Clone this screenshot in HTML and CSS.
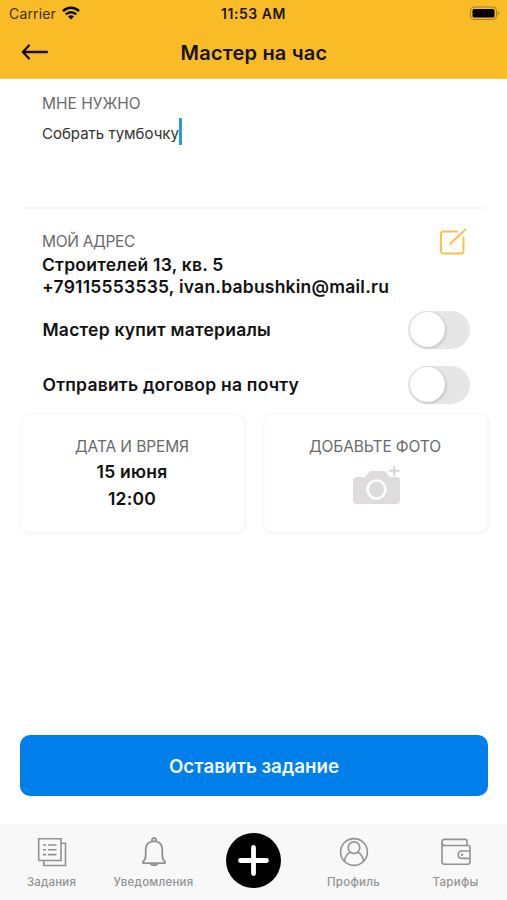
FILE: index.html
```html
<!DOCTYPE html>
<html lang="ru">
<head>
<meta charset="utf-8">
<title>Мастер на час</title>
<link rel="stylesheet" href="styles.css">
</head>
<body>
<div class="app">
  <header class="header">
    <div class="status">
      <div class="status-left"><span class="carrier">Carrier</span>
        <svg class="wifi" width="18" height="14" viewBox="0 0 18 14" fill="none" stroke="#0b0903" stroke-width="2.5"><path d="M1 5.2C5.400.7 12.600.7 17 5.200"/><path d="M3.800 8.300C6.800 5.400 11.200 5.400 14.200 8.300"/><path d="M9 13.500 6 10.400C7.700 8.900 10.300 8.900 12 10.400Z" fill="#0b0903" stroke="none"/></svg>
      </div>
      <span class="time">11:53 AM</span>
      <svg class="battery" width="31" height="15" viewBox="0 0 31 15"><rect x="1.500" y="1" width="26" height="12.500" rx="3.500" fill="none" stroke="#a88024" stroke-width="1"/><rect x="3.500" y="3" width="22" height="8.500" rx="1.500" fill="#000"/><path d="M28.600 5.200v4.200q1.600-.6 1.600-2.100t-1.600-2.100z" fill="#a88024"/></svg>
    </div>
    <div class="titlebar">
      <svg class="back" width="28" height="18" viewBox="0 0 28 18" fill="none" stroke="#161105" stroke-width="2.300" stroke-linecap="round" stroke-linejoin="round"><path d="M26 9H1.800M8 2.500 1.800 9 8 15.500"/></svg>
      <h1 class="title">Мастер на час</h1>
    </div>
  </header>
  <main class="main">
    <section class="need">
      <div class="label label-need">МНЕ НУЖНО</div>
      <div class="input"><span class="input-text">Собрать тумбочку</span><i class="caret"></i></div>
    </section>
    <section class="address">
      <div>
        <div class="label label-address">МОЙ АДРЕС</div>
        <div class="strong street">Строителей 13, кв. 5</div>
        <div class="strong contact">+79115553535, ivan.babushkin@mail.ru</div>
      </div>
      <svg class="edit" width="28" height="28" viewBox="0 0 28 28" fill="none" stroke="#fcc047" stroke-width="1.900" stroke-linecap="round" stroke-linejoin="round"><path d="M18 3.500H4.500Q2 3.500 2 6v17q0 2.500 2.500 2.500h17.500q2.500 0 2.500-2.500V9.500"/><path d="M11 16 24.300 3.400" stroke-width="2.100"/><path d="M26.100 1.700v.1" stroke-width="2.400"/></svg>
    </section>
    <div class="option"><span class="strong buy">Мастер купит материалы</span><span class="toggle"></span></div>
    <div class="option"><span class="strong send">Отправить договор на почту</span><span class="toggle"></span></div>
    <div class="cards">
      <div class="card">
        <div class="label label-date">ДАТА И ВРЕМЯ</div>
        <div class="strong date">15 июня</div>
        <div class="strong hour">12:00</div>
      </div>
      <div class="card">
        <div class="label label-photo">ДОБАВЬТЕ ФОТО</div>
        <svg class="camera" width="48" height="42" viewBox="0 0 48 42"><path d="M4 12h8l4-5q1-1 2.500-1h12q1.500 0 2.500 1l4 5h6q4 0 4 4v19q0 4-4 4H4q-4 0-4-4V16q0-4 4-4z" fill="#dedcdd"/><circle cx="23.500" cy="24.500" r="9" fill="none" stroke="#fff" stroke-width="2.600"/><path d="M41.300 1v10.500M36 6.200h10.600" stroke="#fff" stroke-width="4"/><path d="M41.300.5v10.500M36 5.800h10.600" stroke="#d5d3d4" stroke-width="1.900"/></svg>
      </div>
    </div>
    <button class="submit"><span>Оставить задание</span></button>
  </main>
  <nav class="nav">
    <a class="tab"><svg width="30" height="30" viewBox="0 0 30 30" fill="none" stroke="#929292" stroke-width="1.600"><path d="M1.700 1.700h22.300v21.800H1.700zM24 6.300h4.500v22.200H6.800v-5"/><path d="M6 8h3m2 0h8.500M6 12.800h3m2 0h8.500M6 17.600h3m2 0h8.500"/></svg><span class="tab-tasks">Задания</span></a>
    <a class="tab"><svg width="30" height="30" viewBox="0 0 30 30" fill="none" stroke="#929292" stroke-width="1.800" stroke-linejoin="round"><path d="M13 4.300V3a2 2 0 0 1 4 0v1.300c4.500.9 6.300 4 6.300 8.700v5.500c0 3.500.9 4.800 2.600 6v1.700H4.100v-1.700c1.700-1.200 2.600-2.500 2.600-6V13c0-4.700 1.800-7.800 6.300-8.700z"/><path d="M11.300 26.200a3.800 2.600 0 0 0 7.400 0M13 4.300h4"/></svg><span class="tab-alerts">Уведомления</span></a>
    <a class="add"><svg width="55" height="55" viewBox="0 0 55 55"><circle cx="27.500" cy="27.500" r="27.500" fill="#000"/><path d="M27.500 14.500v26M14.500 27.500h26" stroke="#fff" stroke-width="4.800" stroke-linecap="round"/></svg></a>
    <a class="tab"><svg width="30" height="30" viewBox="0 0 30 30" fill="none" stroke="#929292" stroke-width="1.600"><circle cx="15" cy="15" r="13.400"/><circle cx="15" cy="10.700" r="5.800"/><path d="M5.300 24.500c.8-4.900 2.700-7.700 6-9.300M24.700 24.500c-.8-4.900-2.700-7.700-6-9.300"/></svg><span class="tab-profile">Профиль</span></a>
    <a class="tab"><svg width="30" height="30" viewBox="0 0 30 30" fill="none" stroke="#929292" stroke-width="1.600" stroke-linejoin="round"><path d="M26 8.500V4.200q0-1.800-1.800-1.800H3.200Q1 2.400 1 5.400v19.400q0 2.500 2.500 2.500h23q2.500 0 2.500-2.500V10.500q0-2-2-2H4q-3 0-3-3.100M29 14H20.500q-3.200 0-3.200 3.700t3.200 3.700H29"/><circle cx="21" cy="17.700" r=".5"/></svg><span class="tab-rates">Тарифы</span></a>
  </nav>
</div>
</body>
</html>
```
FILE: styles.css
```css
* { box-sizing: border-box; }
body { margin: 0; font-family: Inter, "Liberation Sans", sans-serif; color: #111; background: #fff; }
.app { display: flex; flex-direction: column; width: 507px; height: 900px; overflow: hidden; }
.header { height: 79px; background: #f9bc27; border-bottom: 1px solid #fbc94f; }
.status { display: grid; grid-template-columns: 1fr auto 1fr; align-items: center; height: 27px; padding: 0 7px 0 9px; }
.status-left { display: flex; align-items: center; gap: 6px; }
.carrier { font-size: 14px; letter-spacing: .15px; color: #3d3012; }
.wifi { margin-top: -2px; }
.time { font-size: 14px; font-weight: 600; letter-spacing: .55px; margin-left: -2px; color: #1d1606; }
.battery { justify-self: end; margin-top: -1px; }
.titlebar { display: grid; grid-template-columns: 1fr auto 1fr; align-items: center; height: 52px; padding: 0 20px 0 21px; }
.back { margin-top: -2px; }
.title { margin: 0; font-size: 20px; font-weight: 600; letter-spacing: .2px; line-height: 24px; color: #17120a; }
.main { display: flex; flex-direction: column; flex: 1; padding: 0 20px; }
.need { height: 130px; margin: 0 0 0 3px; padding: 15px 0 0 19px; border-bottom: 2px solid #f8f8f8; }
.label { font-size: 15.5px; line-height: 20px; color: #6a6a6a; white-space: nowrap; }
.input { display: flex; align-items: center; height: 28px; margin-top: 5px; font-size: 15px; color: #333; }
.caret { width: 3px; height: 27px; background: #229be8; margin-top: -3px; }
.address { display: flex; justify-content: space-between; height: 93px; padding: 23px 20px 0 22px; }
.strong { font-size: 17.5px; font-weight: 600; line-height: 22px; letter-spacing: .23px; white-space: nowrap; }
.label-address { height: 22px; letter-spacing: -.3px; }
.label-date { letter-spacing: -.1px; }
.label-photo { letter-spacing: -.12px; margin-left: -2px; }
.edit { margin-top: -4px; }
.option { display: flex; align-items: center; justify-content: space-between; height: 55px; padding: 0 17px 0 22.5px; }
.toggle { width: 62px; height: 38px; padding: 1.5px; border-radius: 19px; background: #e6e6e6; }
.toggle::before { content: ""; display: block; width: 35px; height: 35px; border-radius: 50%; background: #fff; box-shadow: 1px 1px 3px #bbb; }
.cards { display: grid; grid-template-columns: 228px 228px; justify-content: space-between; width: 471px; margin: 0 0 0 -1px; }
.card { display: flex; flex-direction: column; align-items: center; height: 123px; padding-top: 22px; border: 3px solid #fbfbfb; border-bottom-color: #f8f8f8; border-right-color: #f9f9f9; border-radius: 12px; }
.date { margin-top: 4px; }
.hour { margin-top: 5px; }
.camera { margin-top: 8px; margin-left: 1px; }
.label-date, .date, .hour { margin-left: -2px; }
.submit { width: 468px; height: 61px; margin: auto 0 28px; padding: 1px 0 0; border: 0; border-radius: 10px; background: #007eea; color: #f0faff; font: 600 18.8px Inter, sans-serif; }
.nav { display: grid; grid-template-columns: 103px 101px 99px 101px 103px; height: 76px; background: #f8f8f8; }
.tab { display: flex; flex-direction: column; align-items: center; padding-top: 13px; font-size: 11.5px; font-weight: 500; letter-spacing: .15px; line-height: 16px; color: #929292; }
.tab span { margin-top: 7px; white-space: nowrap; }
.tab-alerts { letter-spacing: .22px; }
.tab-profile, .tab-rates { letter-spacing: .3px; }
.add { justify-self: center; padding-top: 9px; }
```
